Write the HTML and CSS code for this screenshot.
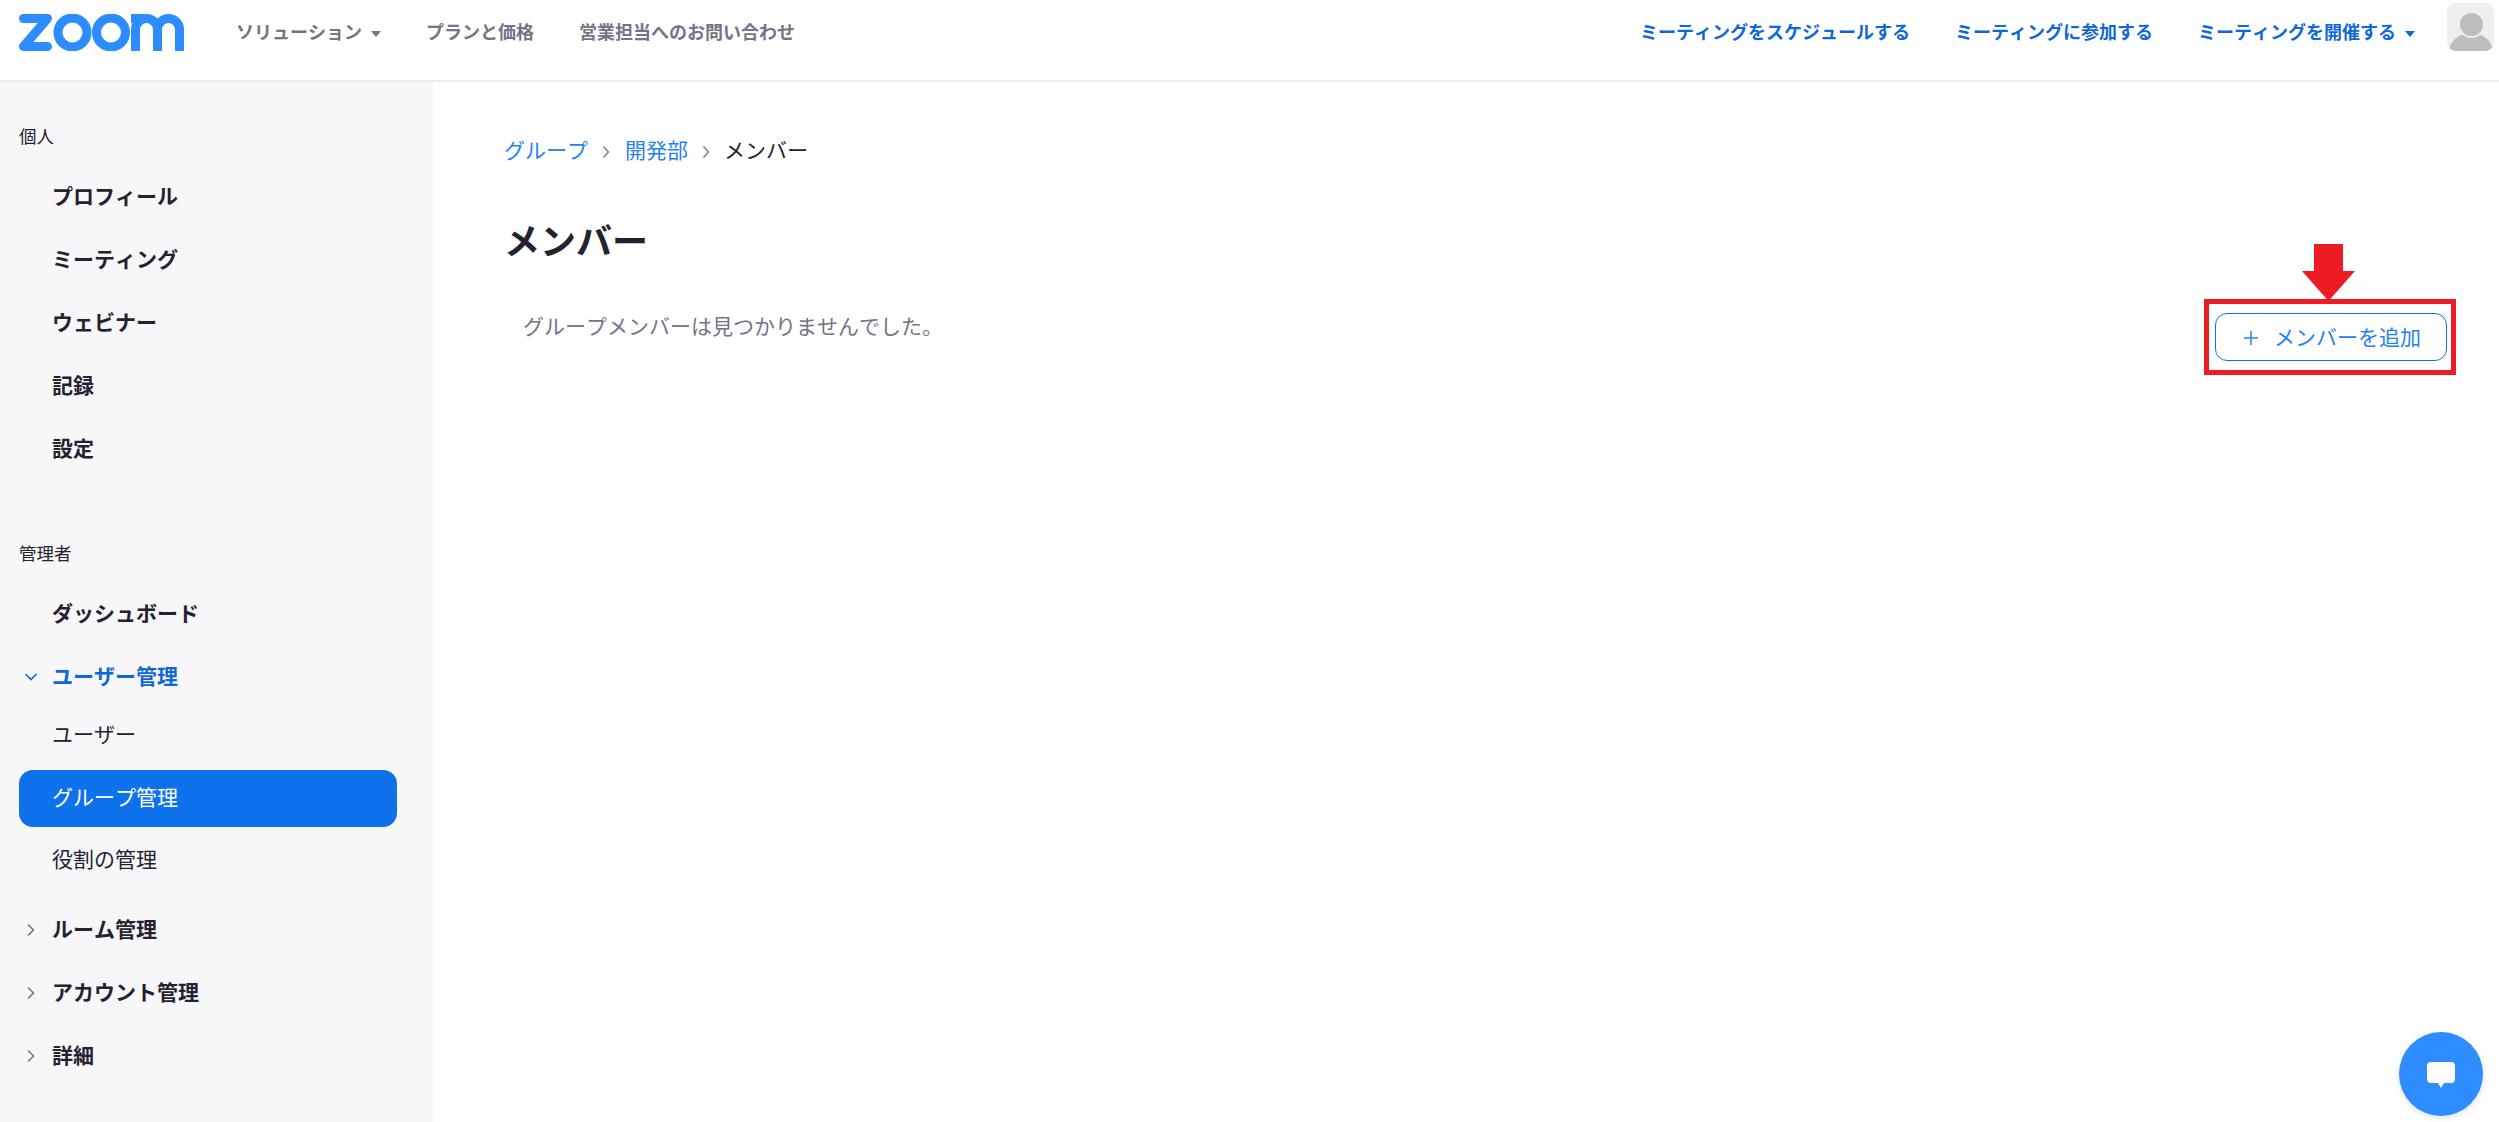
FILE: index.html
```html
<!DOCTYPE html>
<html lang="ja">
<head>
<meta charset="utf-8">
<title>メンバー</title>
<link rel="stylesheet" href="styles.css">
</head>
<body>
<header class="topbar">
  <svg class="logo" viewBox="0 0 165 37" aria-label="zoom">
    <g fill="none" stroke="#2d8cff" stroke-width="9">
      <path d="M4.500 4.500H28.500L4.500 32.500H28.500" stroke-linecap="round" stroke-linejoin="round"/>
      <circle cx="53.500" cy="18.500" r="14.500"/>
      <circle cx="92" cy="18.500" r="14.500"/>
      <path d="M116.500 37V15.500a11 11 0 0 1 22 0V37M138.500 37V15.500a11 11 0 0 1 22 0V37"/>
    </g>
    <rect x="112" y="0" width="12" height="9" fill="#2d8cff"/>
  </svg>
  <nav class="nav-left">
    <a>ソリューション<span class="caret"></span></a>
    <a>プランと価格</a>
    <a>営業担当へのお問い合わせ</a>
  </nav>
  <nav class="nav-right">
    <a>ミーティングをスケジュールする</a>
    <a>ミーティングに参加する</a>
    <a>ミーティングを開催する<span class="caret"></span></a>
  </nav>
  <div class="avatar">
    <svg viewBox="0 0 47 48">
      <ellipse cx="24" cy="49" rx="22" ry="19" fill="#bdbdbd"/>
      <circle cx="24.500" cy="21.500" r="12.500" fill="#bdbdbd" stroke="#f0efeb" stroke-width="2"/>
    </svg>
  </div>
</header>
<div class="layout">
  <aside class="sidebar">
    <div class="group-label">個人</div>
    <a class="item">プロフィール</a>
    <a class="item">ミーティング</a>
    <a class="item">ウェビナー</a>
    <a class="item">記録</a>
    <a class="item">設定</a>
    <div class="group-label group-label-second">管理者</div>
    <a class="item">ダッシュボード</a>
    <a class="item item-open">
      <svg class="chev" viewBox="0 0 14 14"><path d="M1.500 4l5.500 5.500L12.500 4"/></svg>ユーザー管理
    </a>
    <a class="sub sub-first">ユーザー</a>
    <a class="sub sub-active">グループ管理</a>
    <a class="sub">役割の管理</a>
    <a class="item item-after">
      <svg class="chev" viewBox="0 0 14 14"><path d="M4 1.500l5.500 5.500L4 12.500"/></svg>ルーム管理
    </a>
    <a class="item">
      <svg class="chev" viewBox="0 0 14 14"><path d="M4 1.500l5.500 5.500L4 12.500"/></svg>アカウント管理
    </a>
    <a class="item">
      <svg class="chev" viewBox="0 0 14 14"><path d="M4 1.500l5.500 5.500L4 12.500"/></svg>詳細
    </a>
  </aside>
  <main class="main">
    <div class="crumbs">
      <a>グループ</a>
      <svg class="sep" viewBox="0 0 8 14"><path d="M1.500 1.500l5 5.500-5 5.500"/></svg>
      <a>開発部</a>
      <svg class="sep sep-last" viewBox="0 0 8 14"><path d="M1.500 1.500l5 5.500-5 5.500"/></svg>
      <span>メンバー</span>
    </div>
    <h1 class="title">メンバー</h1>
    <div class="content-row">
      <p class="empty">グループメンバーは見つかりませんでした。</p>
      <button class="add-btn"><svg class="plus" viewBox="0 0 14 14"><path d="M7 0v14M0 7h14"/></svg>メンバーを追加</button>
    </div>
  </main>
</div>
<div class="mark-box"></div>
<svg class="mark-arrow" viewBox="0 0 53 58"><path d="M12 1h29v27h12L26.500 58 0 28h12z" fill="#ed1c24"/></svg>
<div class="chat">
  <svg viewBox="0 0 28 26"><path d="M4 0h20a4 4 0 0 1 4 4v13a4 4 0 0 1-4 4h-7l-3 5-3-5H4a4 4 0 0 1-4-4V4a4 4 0 0 1 4-4z" fill="#fff"/></svg>
</div>
</body>
</html>
```
FILE: styles.css
```css
* { box-sizing: border-box; }
html, body { margin: 0; height: 100%; overflow: hidden; }
body {
  font-family: "Noto Sans CJK JP", "Noto Sans", sans-serif;
  font-kerning: none;
  background: #fff;
  color: #23232f;
  display: flex;
  flex-direction: column;
}
.topbar {
  height: 82px;
  flex: none;
  display: flex;
  align-items: flex-start;
  border-bottom: 2px solid #ededf0;
  padding-left: 19px;
}
.logo { width: 165px; height: 37px; margin-top: 14px; flex: none; }
.nav-left, .nav-right {
  display: flex;
  font-size: 18px;
  font-weight: 700;
  line-height: 26px;
  padding-top: 18px;
}
.nav-left { gap: 45px; margin-left: 52px; color: #747487; }
.nav-right { gap: 45px; margin-left: auto; color: #0e68d8; }
.caret {
  display: inline-block;
  width: 0; height: 0;
  border: 5.500px solid transparent;
  border-top: 6px solid currentColor;
  border-bottom: 0;
  margin-left: 9px;
  vertical-align: 2px;
}
.avatar {
  width: 47px; height: 48px;
  margin: 3px 5px 0 32px;
  background: #f0efeb;
  border-radius: 9px;
  overflow: hidden;
  flex: none;
}
.avatar svg { display: block; width: 47px; height: 48px; }
.layout { flex: 1; display: flex; min-height: 0; }
.sidebar {
  width: 433px;
  flex: none;
  background: #f7f7fa;
  padding: 41px 0 0 19px;
}
.group-label { font-size: 17.500px; line-height: 26px; color: #23232f; height: 26px; margin-bottom: 14px; }
.group-label-second { margin-top: 62px; margin-bottom: 14px; }
.item {
  display: flex;
  align-items: center;
  height: 63px;
  padding-left: 33px;
  font-size: 21px;
  font-weight: 700;
  color: #23232f;
  position: relative;
}
.chev {
  position: absolute;
  left: 5px; top: 27px;
  width: 14px; height: 14px;
  fill: none;
  stroke: #747487;
  stroke-width: 1.600;
}
.item-open { color: #0e68d8; }
.item-open .chev { stroke: #0e68d8; }
.sub {
  display: flex;
  align-items: center;
  width: 378px;
  height: 57px;
  margin-bottom: 5px;
  padding-left: 33px;
  font-size: 21px;
  color: #23232f;
  border-radius: 14px;
}
.sub-first { margin-top: -1px; margin-bottom: 10px; height: 55px; }
.sub-active { background: #0e72ed; color: #fff; margin-bottom: 2px; padding-bottom: 5px; }
.item-after { margin-top: 10px; }
.main { flex: 1; padding: 52px 52px 0 71px; min-width: 0; }
.crumbs { font-size: 21px; line-height: 30px; color: #23232f; display: flex; align-items: center; }
.crumbs a { color: #2681f2; }
.sep { width: 8px; height: 14px; margin: 5px 15px 0 14px; fill: none; stroke: #747487; stroke-width: 1.300; }
.sep-last { margin-right: 14px; }
.title { margin: 47px 0 0; font-size: 36px; font-weight: 700; line-height: 56px; color: #23232f; }
.content-row { display: flex; justify-content: space-between; align-items: flex-start; margin-top: 8px; }
.empty { margin: 35px 0 0 19px; font-size: 21px; line-height: 30px; color: #747487; }
.add-btn {
  width: 232px; height: 48px;
  margin-top: 38px;
  background: #fff;
  border: 1.500px solid #0e72ed;
  border-radius: 12px;
  color: #2681f2;
  font: inherit;
  font-size: 21px;
  line-height: 1;
  padding: 0 0 2px 3px;
  display: flex;
  align-items: center;
  justify-content: center;
}
.plus { width: 14px; height: 14px; margin: 3px 16px 0 0; fill: none; stroke: currentColor; stroke-width: 1.500; }
.mark-box { position: absolute; left: 2204px; top: 299px; width: 252px; height: 76px; border: 5px solid #ed1c24; }
.mark-arrow { position: absolute; left: 2302px; top: 243px; width: 53px; height: 58px; }
.chat {
  position: absolute;
  left: 2399px; top: 1032px;
  width: 84px; height: 84px;
  border-radius: 50%;
  background: #2d8cff;
  box-shadow: 0 2px 6px rgba(0,0,0,.12);
  display: flex; align-items: center; justify-content: center;
}
.chat svg { width: 28px; height: 26px; margin-top: 2px; }
```
